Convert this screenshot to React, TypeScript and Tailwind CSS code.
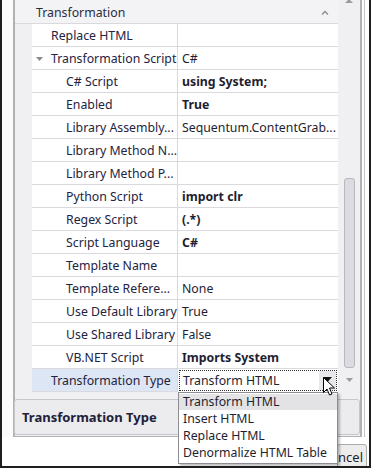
import React from "react";

type Row = { name: string; value: string; bold?: boolean; level: number; expander?: boolean };

const rows: Row[] = [
  { name: "Replace HTML", value: "", level: 0 },
  { name: "Transformation Script", value: "C#", level: 0, expander: true },
  { name: "C# Script", value: "using System;", bold: true, level: 1 },
  { name: "Enabled", value: "True", bold: true, level: 1 },
  { name: "Library Assembly...", value: "Sequentum.ContentGrab...", level: 1 },
  { name: "Library Method N...", value: "", level: 1 },
  { name: "Library Method P...", value: "", level: 1 },
  { name: "Python Script", value: "import clr", bold: true, level: 1 },
  { name: "Regex Script", value: "(.*)", bold: true, level: 1 },
  { name: "Script Language", value: "C#", bold: true, level: 1 },
  { name: "Template Name", value: "", level: 1 },
  { name: "Template Refere...", value: "None", level: 1 },
  { name: "Use Default Library", value: "True", level: 1 },
  { name: "Use Shared Library", value: "False", level: 1 },
  { name: "VB.NET Script", value: "Imports System", bold: true, level: 1 },
];

function PropRow({ r }: { r: Row }) {
  return (
    <div className="flex h-[23px]">
      <div className="w-[146px] h-full border-b border-r border-[#d9d9de] bg-white flex items-center pt-[2px] relative">
        {r.expander && (
          <svg className="absolute left-[4px] top-[10px]" width="7" height="4" viewBox="0 0 7 4">
            <path d="M0 0 L7 0 L3.5 4 Z" fill="#8a8a8a" />
          </svg>
        )}
        <span className={(r.level === 0 ? "pl-[19px]" : "pl-[34px]") + " whitespace-nowrap text-[#23233f]"}>
          {r.name}
        </span>
      </div>
      <div className="w-[160px] h-full border-b border-[#d9d9de] bg-white flex items-center pt-[2px] pl-[4px] overflow-hidden">
        <span className={(r.bold ? "font-bold " : "") + "whitespace-nowrap text-[#1e1e30]"}>{r.value}</span>
      </div>
    </div>
  );
}

export default function App() {
  return (
    <div
      className="w-[375px] h-[473px] bg-white overflow-hidden text-[12.3px] leading-none"
      style={{ fontFamily: '"Noto Sans", "Open Sans", sans-serif' }}
    >
      <div className="w-[371px] h-[468px] border-l-2 border-r-2 border-b-2 border-[#1e1e1e] bg-white flex flex-col relative">
        <div className="flex h-[437px]">
          <div className="w-[11px] bg-[#fbfbfb]" />
          <div className="w-[349px] h-full border-l-2 border-r-2 border-b border-[#b2b2b6] bg-[#f0f0f2] flex flex-col">
            {/* grid */}
            <div className="flex h-[392px]">
              <div className="w-[323px] flex flex-col">
                {/* category */}
                <div className="h-[24px] border-b border-[#d9d9de] bg-[#f3f3f5] flex items-center pt-[3px] pl-[21px] relative">
                  <span className="text-[#2c2c3c] whitespace-nowrap">Transformation</span>
                  <svg className="absolute left-[306px] top-[10px]" width="8" height="5" viewBox="0 0 8 5">
                    <path d="M1 4.5 L4 1.5 L7 4.5" fill="none" stroke="#8a8a90" strokeWidth="1.3" />
                  </svg>
                </div>
                <div className="flex">
                  <div className="w-[17px] shrink-0" />
                  <div className="flex flex-col">
                    {rows.map((r) => (
                      <PropRow key={r.name} r={r} />
                    ))}
                    {/* editing row */}
                    <div className="flex h-[23px]">
                      <div className="w-[146px] h-full border-b border-r border-[#d9d9de] bg-[#dce6f4] flex items-center pt-[2px]">
                        <span className="pl-[19px] whitespace-nowrap text-[#23233f]">Transformation Type</span>
                      </div>
                      <div className="w-[160px] h-full bg-white p-px">
                        <div className="h-full border border-dotted border-[#333] flex items-center pl-[3px] pr-0">
                          <span className="flex-1 pt-[2px] whitespace-nowrap text-[#1e1e30]">Transform HTML</span>
                          <div className="w-[17px] h-full bg-[#e8e8ec] flex items-start justify-center pt-[6px]">
                            <svg width="9" height="5" viewBox="0 0 9 5">
                              <path d="M0 0 L9 0 L4.5 5 Z" fill="#111" />
                            </svg>
                          </div>
                        </div>
                      </div>
                    </div>
                  </div>
                </div>
              </div>
              {/* scrollbar */}
              <div className="w-[22px] h-full bg-[#f0f0f2] flex flex-col items-center">
                <svg className="mt-[-2px]" width="8" height="5" viewBox="0 0 8 5">
                  <path d="M0 5 L4 1 L8 5 Z" fill="#9a9aa0" />
                </svg>
                <div className="mt-[175px] w-[11px] h-[190px] rounded-[3px] border border-[#b8b8be] bg-[#dcdce0]" />
                <svg className="mt-[10px]" width="7" height="4" viewBox="0 0 7 4">
                  <path d="M0 0 L7 0 L3.5 4 Z" fill="#9a9aa0" />
                </svg>
              </div>
            </div>
            {/* description */}
            <div className="mt-[7px] h-[36px] ml-[-1px] border border-[#c6c6cc] rounded-[3px] bg-[#ececee] flex items-center pl-[7px]">
              <span className="font-bold text-[13px] text-[#20203a] whitespace-nowrap">Transformation Type</span>
            </div>
          </div>
          <div className="w-[2px]" />
          <div className="w-px bg-[#c4c4c8]" />
        </div>
        {/* footer */}
        <div className="flex-1 flex justify-end pt-[7px] pr-[2px] overflow-hidden">
          <div className="w-[30px] h-[26px] border border-[#adadad] rounded-[3px] bg-[#ececec] flex items-center justify-end pr-[3px] text-[13px] text-[#1e1e30] overflow-hidden">
            <span className="whitespace-nowrap">ncel</span>
          </div>
        </div>

        {/* dropdown list */}
        <div className="absolute left-[176px] top-[392px] w-[160px] h-[72px] bg-white border border-[#8c8c92] shadow-[2px_2px_2px_rgba(0,0,0,0.25)] flex flex-col py-px">
          <div className="h-[17px] bg-[#e3e3e6] flex items-center pl-[4px] text-[#1e1e30] whitespace-nowrap">Transform HTML</div>
          <div className="h-[18px] flex items-center pl-[4px] text-[#1e1e30] whitespace-nowrap">Insert HTML</div>
          <div className="h-[18px] flex items-center pl-[4px] text-[#1e1e30] whitespace-nowrap">Replace HTML</div>
          <div className="h-[18px] flex items-center pl-[4px] text-[#1e1e30] whitespace-nowrap">Denormalize HTML Table</div>
        </div>

        {/* cursor */}
        <svg className="absolute left-[321px] top-[377px]" width="13" height="20" viewBox="0 0 13 20">
          <path d="M0.5 0.5 L0.5 15.5 L4 12 L6.5 18 L9 17 L6.5 11 L11.5 11 Z" fill="#fff" stroke="#000" strokeWidth="1" />
        </svg>
      </div>
    </div>
  );
}
